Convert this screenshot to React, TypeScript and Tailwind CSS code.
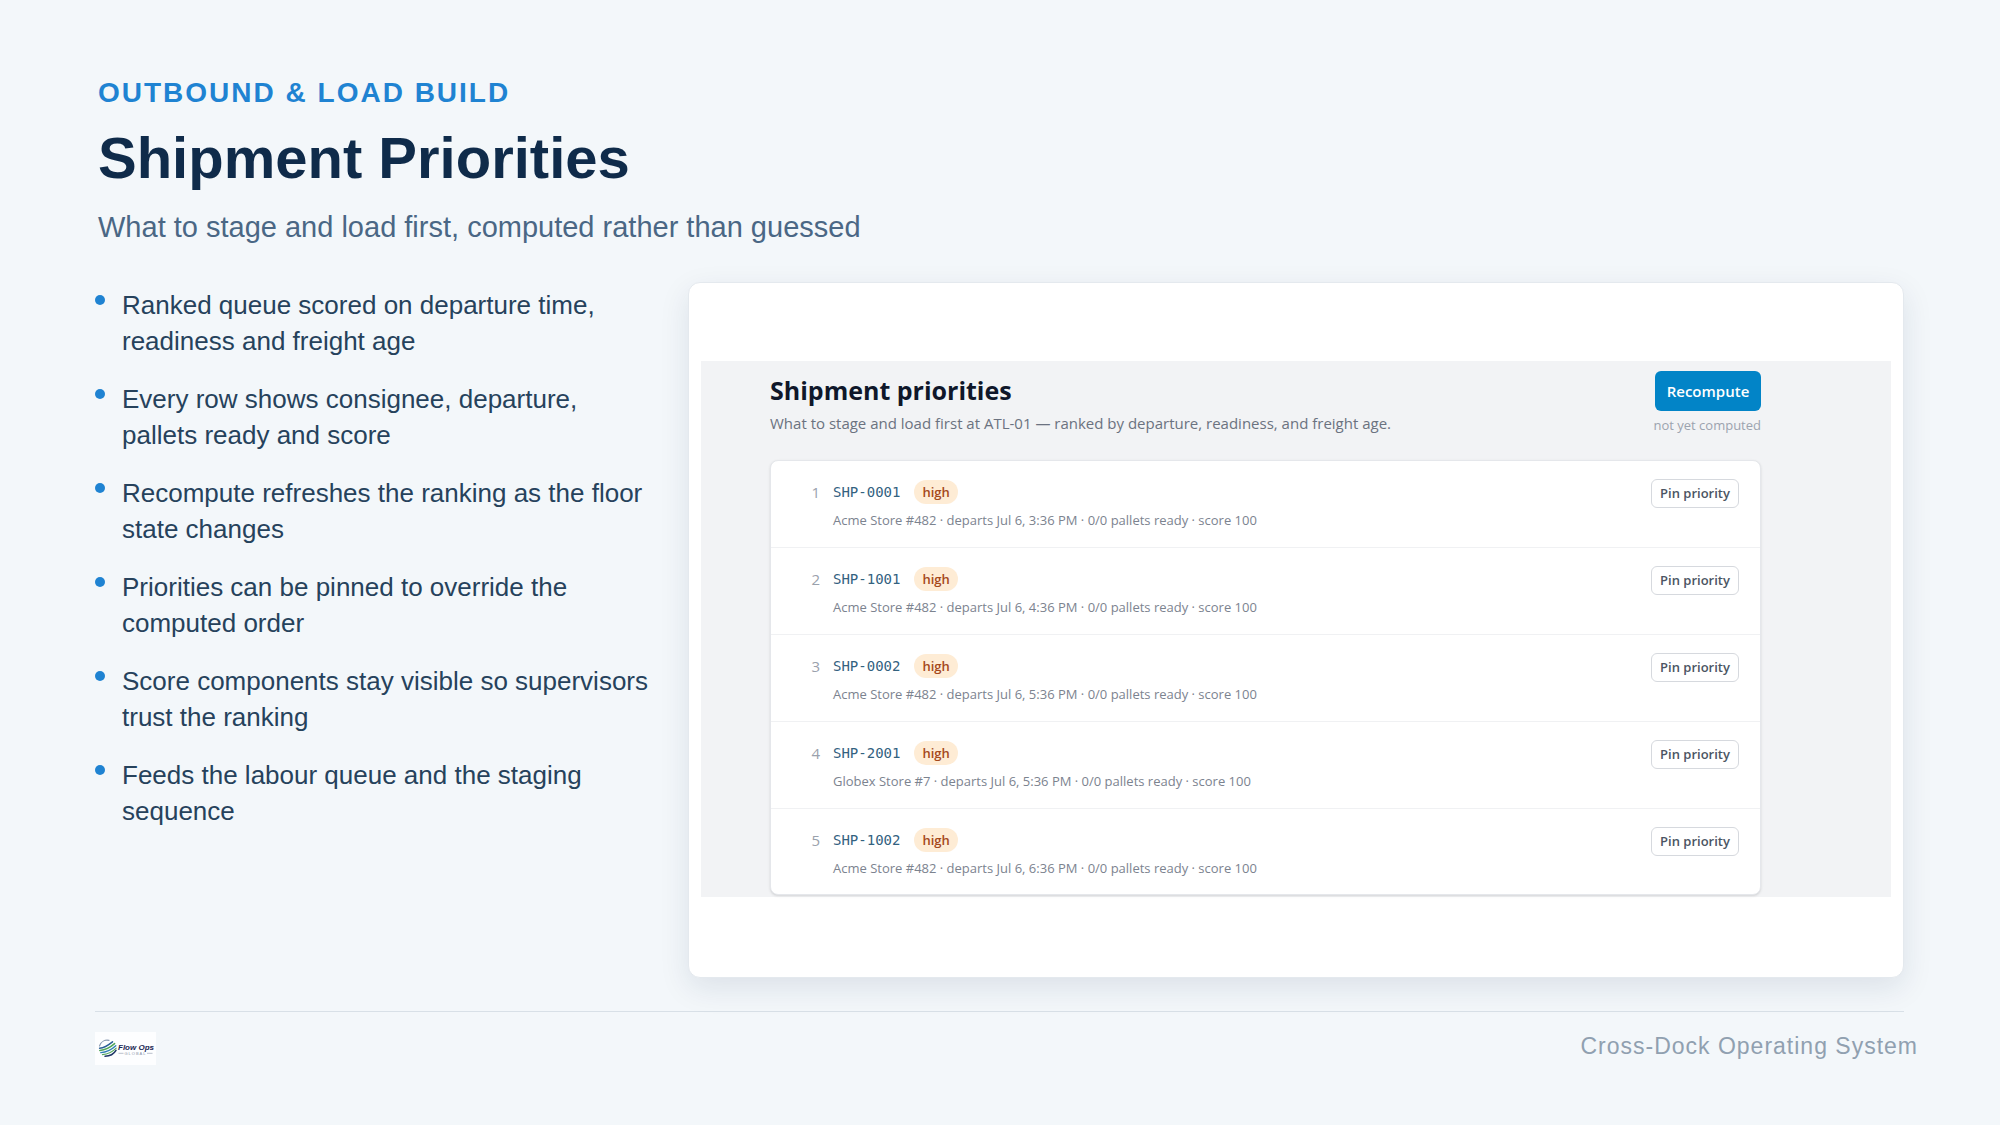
const points = [
  "Ranked queue scored on departure time, readiness and freight age",
  "Every row shows consignee, departure, pallets ready and score",
  "Recompute refreshes the ranking as the floor state changes",
  "Priorities can be pinned to override the computed order",
  "Score components stay visible so supervisors trust the ranking",
  "Feeds the labour queue and the staging sequence",
];

const shipments = [
  { id: "SHP-0001", store: "Acme Store #482", departs: "Jul 6, 3:36 PM" },
  { id: "SHP-1001", store: "Acme Store #482", departs: "Jul 6, 4:36 PM" },
  { id: "SHP-0002", store: "Acme Store #482", departs: "Jul 6, 5:36 PM" },
  { id: "SHP-2001", store: "Globex Store #7", departs: "Jul 6, 5:36 PM" },
  { id: "SHP-1002", store: "Acme Store #482", departs: "Jul 6, 6:36 PM" },
];

function Logo() {
  return (
    <svg className="w-[61px] h-[33px]" viewBox="0 0 61 33" role="img" aria-label="Flow Ops Global">
      <rect width="61" height="33" fill="#fdfeff" />
      {/* globe */}
      <g fill="none" strokeLinecap="round">
        <path d="M4.5 14C6 9.5 10 7.6 14 8.4" stroke="#8b9bb2" strokeWidth="1.2" />
        <path d="M4.6 16.2C9 15.8 13.5 13 17.5 9.8" stroke="#2a5f96" strokeWidth="1.5" />
        <path d="M4.8 18.4C10 18 15 15.6 19.6 11.6" stroke="#4fa657" strokeWidth="1.5" />
        <path d="M5.8 20.6C11 20.4 16.5 17.8 20.8 13.8" stroke="#2f7fb5" strokeWidth="1.4" />
        <path d="M7.4 22.6C12.5 22.4 17.5 20 21.2 16.2" stroke="#53a75b" strokeWidth="1.1" />
        <path d="M10 24.2C14.5 24.2 19 21.8 21 18.4" stroke="#1d3566" strokeWidth="1.5" />
      </g>
      <text x="23" y="18" fill="#1a2754" fontFamily="Liberation Sans, sans-serif" fontSize="8" fontWeight="700" fontStyle="italic">
        Flow Ops
      </text>
      <path d="M23.5 21.3h5M52 21.3h5.5" stroke="#8b95a8" strokeWidth="0.6" />
      <text x="40.5" y="22.6" textAnchor="middle" fill="#8b95a8" fontFamily="Liberation Sans, sans-serif" fontSize="4" letterSpacing="1">
        GLOBAL
      </text>
    </svg>
  );
}

function ShipmentRow({ rank, id, store, departs }: { rank: number; id: string; store: string; departs: string }) {
  return (
    <li className="flex items-start h-[87px] pt-[18px] pr-[21px] border-b border-[#f0f1f3] last:h-[85px] last:border-b-0">
      <span className="w-[49px] pt-px text-right text-[15px] leading-6 text-[#9aa1ac]">{rank}</span>
      <div className="flex-1 pl-[13px]">
        <div className="flex items-center gap-[14px]">
          <span className="font-['DejaVu_Sans_Mono',monospace] text-[14px] leading-[26px] text-[#33627f]">{id}</span>
          <span className="h-6 px-2 rounded-full bg-[#feecd5] text-[13px] leading-6 font-semibold text-[#a5481c]">high</span>
        </div>
        <p className="mt-[5px] text-[13px] leading-5 text-[#7c838f]">
          {store} · departs {departs} · 0/0 pallets ready · score 100
        </p>
      </div>
      <button className="h-[29px] w-[88px] rounded-md border border-[#d6d9de] bg-white text-[13px] font-semibold text-[#4b5563]">
        Pin priority
      </button>
    </li>
  );
}

function PriorityPanel() {
  return (
    <div className="bg-[#f2f3f5] pl-[69px] pr-[130px] pt-[10px] pb-[2px] font-['Open_Sans','Noto_Sans',sans-serif]">
      <div className="flex justify-between items-start">
        <div>
          <h2 className="text-[25px] leading-[38px] font-bold text-[#0f172a]">Shipment priorities</h2>
          <p className="mt-[2px] text-[15px] leading-6 text-[#6b7280]">
            What to stage and load first at ATL-01 — ranked by departure, readiness, and freight age.
          </p>
        </div>
        <div className="flex flex-col items-end">
          <button className="h-10 w-[106px] rounded-md bg-[#0284c7] text-[15px] font-semibold text-white">Recompute</button>
          <span className="mt-1 text-[13px] leading-5 text-[#9ca3af]">not yet computed</span>
        </div>
      </div>
      <ul className="mt-[25px] rounded-lg border border-[#e5e7eb] bg-white shadow-sm">
        {shipments.map((s, i) => (
          <ShipmentRow key={s.id} rank={i + 1} {...s} />
        ))}
      </ul>
    </div>
  );
}

export default function App() {
  return (
    <div className="min-h-screen bg-[#f3f7fa] pl-[95px] pr-24 pt-[77px] pb-[60px] font-['Liberation_Sans',Arial,sans-serif]">
      <header className="pl-[3px]">
        <p className="text-[28px] leading-8 font-bold tracking-[2px] text-[#1f83d2]">OUTBOUND &amp; LOAD BUILD</p>
        <h1 className="mt-[15px] text-[58px] leading-[68px] font-bold text-[#0f2b4a]">Shipment Priorities</h1>
        <p className="mt-[18px] text-[29px] leading-[34px] text-[#4a6785]">
          What to stage and load first, computed rather than guessed
        </p>
      </header>

      <main className="mt-[38px] grid grid-cols-[553px_1fr] gap-10">
        <ul className="flex flex-col gap-[22px] pt-[5px]">
          {points.map((point) => (
            <li key={point} className="flex gap-[17px] text-[26px] leading-9 text-[#26425c]">
              <span className="mt-2 size-[10px] shrink-0 rounded-full bg-[#1f83d2]" />
              <span>{point}</span>
            </li>
          ))}
        </ul>

        <section className="rounded-xl border border-[#e4e9ee] bg-white px-3 pt-[78px] pb-20 shadow-[0_10px_30px_rgba(15,43,74,0.1)]">
          <PriorityPanel />
        </section>
      </main>

      <footer className="mt-[33px] flex items-start justify-between border-t border-[#d8e0e7] pt-5">
        <Logo />
        <span className="-mr-[14px] text-[23px] leading-7 tracking-[1px] text-[#90a0b0]">Cross-Dock Operating System</span>
      </footer>
    </div>
  );
}
